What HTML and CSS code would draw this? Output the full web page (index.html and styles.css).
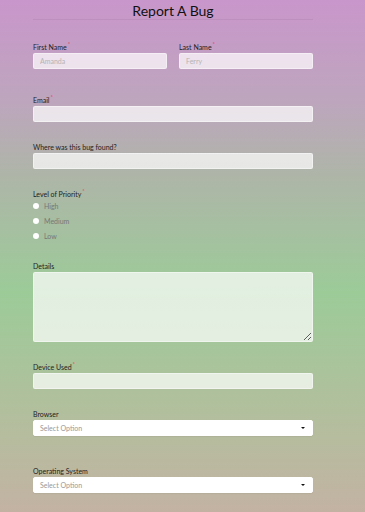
FILE: index.html
```html
<!DOCTYPE html>
<html lang="en">

<head>
    <meta charset="UTF-8">
    <meta name="viewport" content="width=device-width, initial-scale=1.0">
    <title>Report A Bug</title>
    <link rel="stylesheet" href="styles.css">
</head>

<body>
    <form class="bug-form">
        <h1 class="title">Report A Bug</h1>

        <div class="row first">
            <div class="field">
                <label>First Name<span class="req">*</span></label>
                <input type="text" placeholder="Amanda">
            </div>
            <div class="field">
                <label>Last Name<span class="req">*</span></label>
                <input type="text" placeholder="Ferry">
            </div>
        </div>

        <div class="field wide">
            <label>Email<span class="req">*</span></label>
            <input type="email">
        </div>

        <div class="field">
            <label>Where was this bug found?</label>
            <input type="text">
        </div>

        <div class="field">
            <label class="group-label">Level of Priority<span class="req">*</span></label>
            <div class="options">
                <div class="option"><span class="dot"></span>High</div>
                <div class="option"><span class="dot"></span>Medium</div>
                <div class="option"><span class="dot"></span>Low</div>
            </div>
        </div>

        <div class="field details">
            <label>Details</label>
            <textarea></textarea>
        </div>

        <div class="field">
            <label>Device Used<span class="req">*</span></label>
            <input type="text">
        </div>

        <div class="field">
            <label>Browser</label>
            <div class="select">
                <select>
                    <option>Select Option</option>
                </select>
            </div>
        </div>

        <div class="field wider">
            <label>Operating System</label>
            <div class="select">
                <select>
                    <option>Select Option</option>
                </select>
            </div>
        </div>
    </form>
</body>

</html>
```

FILE: styles.css
```css
body {
    margin: 0;
    padding: 0;
    min-height: 512px;
    font-family: Lato, "Noto Sans", sans-serif;
    color: #1e1e1e;
    background: linear-gradient(to bottom,
            #c996cb 0%,
            #bda6bd 20%,
            #aeb5a8 34%,
            #9ccb98 57%,
            #b5bd9e 84%,
            #c3b2a3 100%);
}

.bug-form {
    width: 280px;
    margin-left: 33px;
    padding-bottom: 20px;
}

.title {
    margin: 0;
    height: 19px;
    line-height: 22px;
    font-size: 14px;
    font-weight: 400;
    text-align: center;
    color: #111;
    border-bottom: 1px solid rgba(120, 70, 120, 0.12);
}

.row {
    display: flex;
    gap: 12px;
}

.row .field {
    flex: 1;
}

.field {
    display: flex;
    flex-direction: column;
    margin-top: 21px;
}

.row.first {
    margin-top: 23px;
}

.row.first .field {
    margin-top: 0;
}

.field.wide {
    margin-top: 27px;
}

.field.details {
    margin-top: 19px;
}

.field.wider {
    margin-top: 31px;
}

label {
    font-size: 7px;
    line-height: 8px;
    font-weight: 400;
    color: #222;
    margin-bottom: 2px;
}

.group-label {
    margin-bottom: 0;
}

.req {
    color: #e8344a;
    font-size: 6px;
    line-height: 6px;
    vertical-align: top;
    margin-left: 1px;
    position: relative;
    top: -2px;
}

input,
textarea,
select {
    display: block;
    box-sizing: border-box;
    width: 100%;
    font-family: inherit;
    font-size: 7px;
    color: #333;
    border: 1px solid rgba(255, 255, 255, 0.45);
    border-radius: 2px;
    background-color: rgba(255, 255, 255, 0.7);
    padding: 0 6px;
    outline: none;
}

input {
    height: 16px;
}

input::placeholder {
    color: #b4b4b4;
}

textarea {
    height: 70px;
    resize: vertical;
}

.options {
    display: flex;
    flex-direction: column;
}

.option {
    display: flex;
    align-items: center;
    height: 15px;
    font-size: 7px;
    color: #777;
}

.dot {
    width: 6px;
    height: 6px;
    border-radius: 50%;
    background-color: #fff;
    margin-right: 5px;
}

.select {
    position: relative;
}

.select select {
    height: 16px;
    appearance: none;
    -webkit-appearance: none;
    background-color: #fff;
    color: #999;
    border-color: #fff;
    box-shadow: 0 1px 1px rgba(0, 0, 0, 0.05);
}

.select::after {
    content: "";
    position: absolute;
    right: 8px;
    top: 7px;
    border-left: 2px solid transparent;
    border-right: 2px solid transparent;
    border-top: 2px solid #111;
}
```
